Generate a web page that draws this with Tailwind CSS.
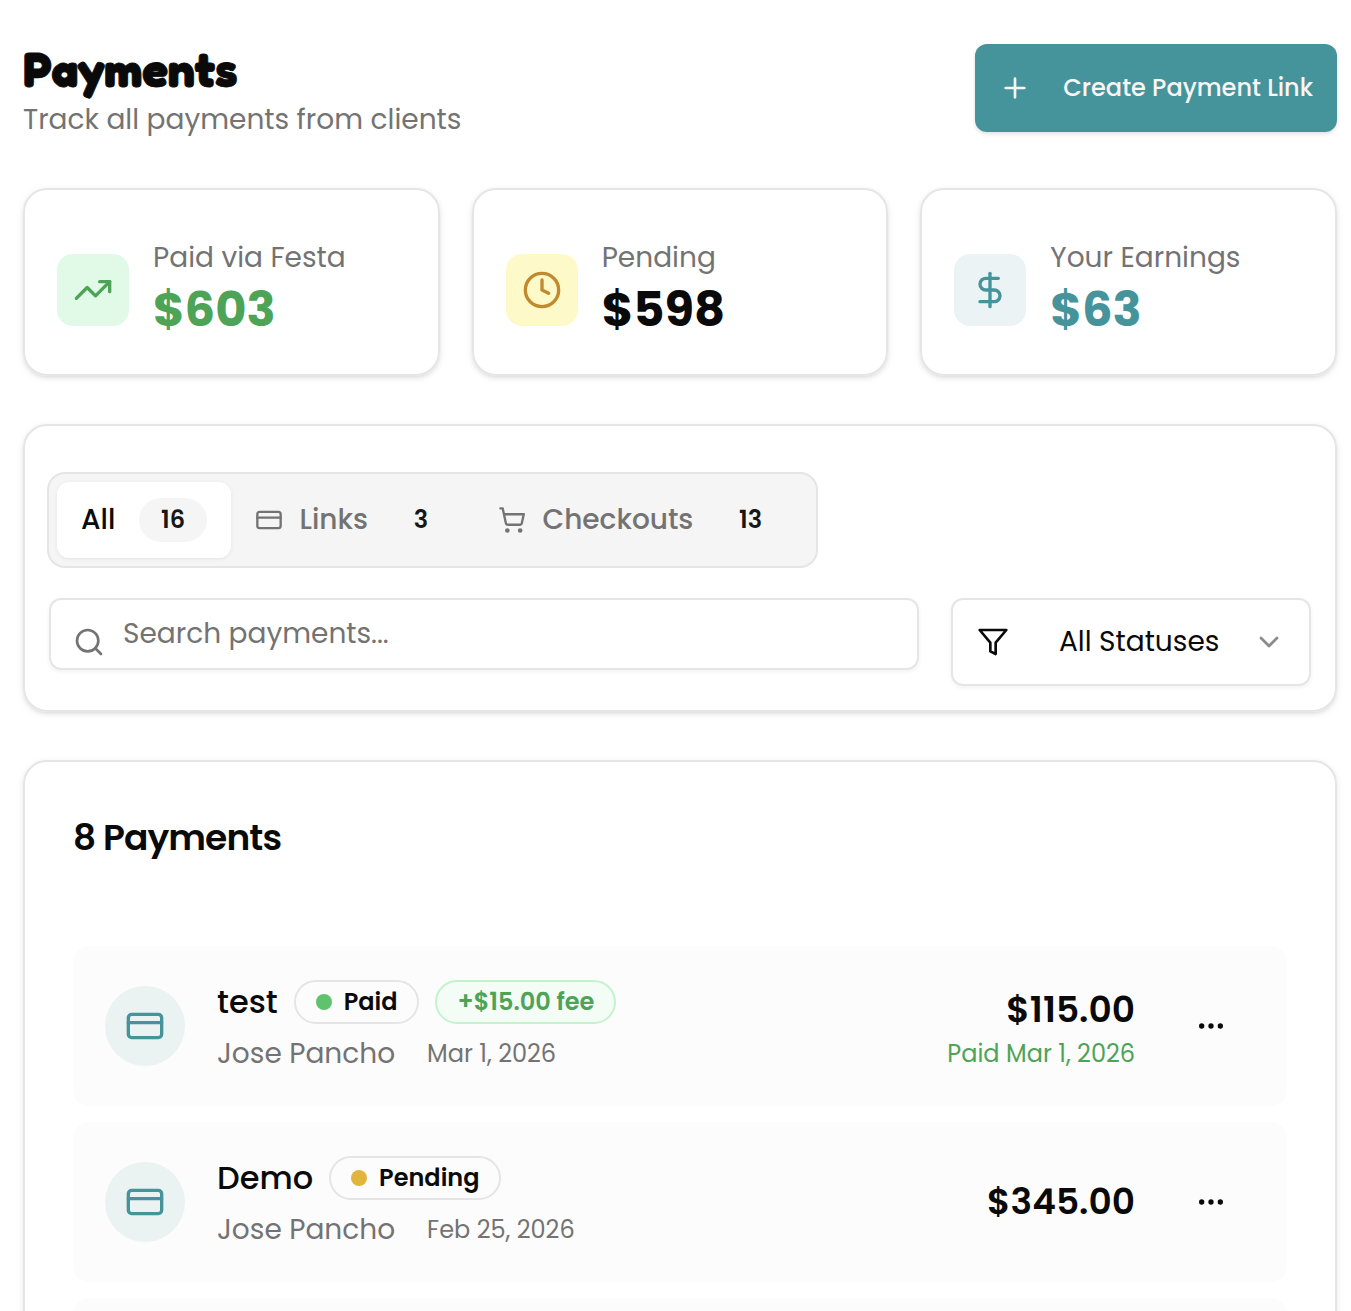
<!DOCTYPE html>
<html lang="en">
<head>
  <meta charset="UTF-8" />
  <title>Payments</title>
  <script src="https://cdn.jsdelivr.net/npm/@tailwindcss/browser@4"></script>
</head>

<body class="bg-white text-[#0a0a0a] font-['Poppins','Inter',sans-serif] antialiased">
<main class="h-[1311px] overflow-hidden pl-[23px] pr-[14px] pt-9">

  <!-- ── header ──────────────────────────────────────────────────────────── -->
  <header class="flex items-center justify-between">
    <div>
      <h1 class="font-['Fredoka_One','Fredoka','Inter',sans-serif] font-bold text-5xl leading-[62px] pt-0.5 [-webkit-text-stroke:0.8px_#0a0a0a]">Payments</h1>
      <p class="text-[28px] leading-10 text-[#737373]">Track all payments from clients</p>
    </div>
    <button class="flex items-center h-22 px-6 gap-8 rounded-xl bg-[#46949b] text-[#faf5f5] text-2xl font-medium shadow-[0_2px_4px_rgba(0,0,0,0.12)]">
      <svg class="size-8" viewBox="0 0 24 24" fill="none" stroke="currentColor" stroke-width="2" stroke-linecap="round"><path d="M5 12h14M12 5v14" /></svg>
      <span class="whitespace-nowrap">Create Payment Link</span>
    </button>
  </header>

  <!-- ── stat cards ──────────────────────────────────────────────────────── -->
  <section class="grid grid-cols-3 gap-8 mt-12">
    <div class="flex items-center gap-6 h-[188px] pt-4 pl-8 rounded-3xl border-2 border-[#e5e5e5] shadow-[0_2px_6px_rgba(0,0,0,0.1),0_2px_4px_-2px_rgba(0,0,0,0.1)]">
      <div class="flex items-center justify-center size-18 rounded-2xl bg-[#e1f9e7] text-[#4da356]">
        <svg class="size-10" viewBox="0 0 24 24" fill="none" stroke="currentColor" stroke-width="2" stroke-linecap="round" stroke-linejoin="round"><path d="M16 7h6v6" /><path d="m22 7-8.5 8.5-5-5L2 17" /></svg>
      </div>
      <div>
        <p class="text-[28px] leading-10 text-[#737373]">Paid via Festa</p>
        <p class="text-5xl leading-16 font-bold text-[#4da356]">$603</p>
      </div>
    </div>
    <div class="flex items-center gap-6 h-[188px] pt-4 pl-8 rounded-3xl border-2 border-[#e5e5e5] shadow-[0_2px_6px_rgba(0,0,0,0.1),0_2px_4px_-2px_rgba(0,0,0,0.1)]">
      <div class="flex items-center justify-center size-18 rounded-2xl bg-[#fef9c9] text-[#c18a2e]">
        <svg class="size-10" viewBox="0 0 24 24" fill="none" stroke="currentColor" stroke-width="2" stroke-linecap="round" stroke-linejoin="round"><circle cx="12" cy="12" r="10" /><path d="M12 6v6l4 2" /></svg>
      </div>
      <div>
        <p class="text-[28px] leading-10 text-[#737373]">Pending</p>
        <p class="text-5xl leading-16 font-bold">$598</p>
      </div>
    </div>
    <div class="flex items-center gap-6 h-[188px] pt-4 pl-8 rounded-3xl border-2 border-[#e5e5e5] shadow-[0_2px_6px_rgba(0,0,0,0.1),0_2px_4px_-2px_rgba(0,0,0,0.1)]">
      <div class="flex items-center justify-center size-18 rounded-2xl bg-[#ebf3f5] text-[#46949b]">
        <svg class="size-10" viewBox="0 0 24 24" fill="none" stroke="currentColor" stroke-width="2" stroke-linecap="round" stroke-linejoin="round"><path d="M12 2v20" /><path d="M17 5H9.5a3.5 3.5 0 0 0 0 7h5a3.5 3.5 0 0 1 0 7H6" /></svg>
      </div>
      <div>
        <p class="text-[28px] leading-10 text-[#737373]">Your Earnings</p>
        <p class="text-5xl leading-16 font-bold text-[#46949b]">$63</p>
      </div>
    </div>
  </section>

  <!-- ── tabs + filters ──────────────────────────────────────────────────── -->
  <section class="mt-12 h-[288px] pt-[46px] px-6 rounded-3xl border-2 border-[#e5e5e5] shadow-[0_2px_6px_rgba(0,0,0,0.1),0_2px_4px_-2px_rgba(0,0,0,0.1)]">
    <div class="flex items-center -ml-0.5 w-[771px] h-24 px-2 rounded-[18px] border-2 border-[#e5e5e5] bg-[#f5f5f5] text-[28px] font-medium">
      <button class="flex items-center h-19 w-[174px] pl-6 rounded-xl bg-white shadow-[0_1px_4px_rgba(0,0,0,0.07)]">
        <span class="w-[58px] text-left">All</span>
        <span class="flex items-center justify-center w-17 h-11 rounded-full bg-[#f5f5f5] text-2xl font-semibold text-[#171717]">16</span>
      </button>
      <button class="flex items-center h-19 w-[243px] pl-6 text-[#737373]">
        <svg class="size-7 mr-[16.5px]" viewBox="0 0 24 24" fill="none" stroke="currentColor" stroke-width="2" stroke-linecap="round" stroke-linejoin="round"><rect width="20" height="14" x="2" y="5" rx="2" /><path d="M2 10h20" /></svg>
        <span class="w-[87.5px] text-left">Links</span>
        <span class="w-17 text-center text-2xl font-semibold text-[#171717]">3</span>
      </button>
      <button class="flex items-center h-19 pl-6 text-[#737373]">
        <svg class="size-7 mr-[16.5px]" viewBox="0 0 24 24" fill="none" stroke="currentColor" stroke-width="2" stroke-linecap="round" stroke-linejoin="round"><circle cx="8" cy="21" r="1" /><circle cx="19" cy="21" r="1" /><path d="M2.05 2.05h2l2.66 12.42a2 2 0 0 0 2 1.58h9.78a2 2 0 0 0 1.95-1.57l1.65-7.43H5.12" /></svg>
        <span class="w-[174px] text-left">Checkouts</span>
        <span class="w-17 text-center text-2xl font-semibold text-[#171717]">13</span>
      </button>
    </div>

    <div class="flex gap-8 mt-[30px]">
      <div class="flex w-[870px] h-18 pl-[22px] rounded-xl border-2 border-[#e5e5e5] shadow-[0_2px_4px_rgba(0,0,0,0.05)]">
        <svg class="size-8 mt-[26px] mr-[18px] text-[#737373]" viewBox="0 0 24 24" fill="none" stroke="currentColor" stroke-width="2" stroke-linecap="round"><circle cx="11" cy="11" r="8" /><path d="m21 21-4.3-4.3" /></svg>
        <input type="text" placeholder="Search payments..." class="flex-1 h-17 text-[28px] placeholder:text-[#737373] focus:outline-none" />
      </div>
      <button class="flex items-center w-[360px] h-22 pl-6 rounded-xl border-2 border-[#e5e5e5] text-[28px] shadow-[0_2px_4px_rgba(0,0,0,0.05)]">
        <svg class="size-8" viewBox="0 0 24 24" fill="none" stroke="currentColor" stroke-width="2" stroke-linecap="round" stroke-linejoin="round"><polygon points="22 3 2 3 10 12.46 10 19 14 21 14 12.46 22 3" /></svg>
        <span class="w-[194px] ml-[50px] text-left">All Statuses</span>
        <svg class="size-8" viewBox="0 0 24 24" fill="none" stroke="#8a8a8a" stroke-width="2" stroke-linecap="round" stroke-linejoin="round"><path d="m6 9 6 6 6-6" /></svg>
      </button>
    </div>
  </section>

  <!-- ── payments list ───────────────────────────────────────────────────── -->
  <section class="mt-12 px-12 pb-12 rounded-3xl border-2 border-[#e5e5e5] shadow-[0_2px_6px_rgba(0,0,0,0.1)]">
    <h2 class="pt-12 text-4xl leading-[56px] font-semibold tracking-tight">8 Payments</h2>

    <div class="flex flex-col gap-4 mt-20">
      <div class="flex items-center h-40 px-8 rounded-2xl bg-[#fcfcfc]">
        <div class="flex items-center justify-center size-20 rounded-full bg-[#eaf2f2] text-[#46949b]">
          <svg class="size-10" viewBox="0 0 24 24" fill="none" stroke="currentColor" stroke-width="2" stroke-linecap="round" stroke-linejoin="round"><rect width="20" height="14" x="2" y="5" rx="2" /><path d="M2 10h20" /></svg>
        </div>
        <div class="ml-8">
          <div class="flex items-center h-12 gap-4">
            <span class="text-[32px] font-medium">test</span>
            <span class="flex items-center h-11 px-5 rounded-full border-2 border-[#e5e5e5] text-2xl font-semibold"><i class="size-4 mr-3 rounded-full bg-[#5fc26c]"></i>Paid</span>
            <span class="flex items-center h-11 px-5 rounded-full border-2 border-[#c3f3cd] bg-[#f3fcf5] text-[#4da356] text-2xl font-semibold">+$15.00 fee</span>
          </div>
          <div class="flex items-center gap-8 h-10 mt-2 text-[#737373]">
            <span class="text-[28px]">Jose Pancho</span>
            <span class="text-2xl">Mar 1, 2026</span>
          </div>
        </div>
        <div class="ml-auto mr-[60px] text-right">
          <p class="text-4xl leading-[56px] font-semibold">$115.00</p>
          <p class="text-2xl leading-8 text-[#4da356]">Paid Mar 1, 2026</p>
        </div>
        <svg class="size-8 mr-7" viewBox="0 0 24 24" fill="currentColor"><circle cx="5" cy="12" r="2" /><circle cx="12" cy="12" r="2" /><circle cx="19" cy="12" r="2" /></svg>
      </div>

      <div class="flex items-center h-40 px-8 rounded-2xl bg-[#fcfcfc]">
        <div class="flex items-center justify-center size-20 rounded-full bg-[#eaf2f2] text-[#46949b]">
          <svg class="size-10" viewBox="0 0 24 24" fill="none" stroke="currentColor" stroke-width="2" stroke-linecap="round" stroke-linejoin="round"><rect width="20" height="14" x="2" y="5" rx="2" /><path d="M2 10h20" /></svg>
        </div>
        <div class="ml-8">
          <div class="flex items-center h-12 gap-4">
            <span class="text-[32px] font-medium">Demo</span>
            <span class="flex items-center h-11 px-5 rounded-full border-2 border-[#e5e5e5] text-2xl font-semibold"><i class="size-4 mr-3 rounded-full bg-[#e1b43e]"></i>Pending</span>
          </div>
          <div class="flex items-center gap-8 h-10 mt-2 text-[#737373]">
            <span class="text-[28px]">Jose Pancho</span>
            <span class="text-2xl">Feb 25, 2026</span>
          </div>
        </div>
        <p class="ml-auto mr-[60px] text-4xl leading-[56px] font-semibold">$345.00</p>
        <svg class="size-8 mr-7" viewBox="0 0 24 24" fill="currentColor"><circle cx="5" cy="12" r="2" /><circle cx="12" cy="12" r="2" /><circle cx="19" cy="12" r="2" /></svg>
      </div>

      <div class="h-40 rounded-2xl bg-[#fcfcfc]"></div>
    </div>
  </section>

</main>
</body>
</html>
